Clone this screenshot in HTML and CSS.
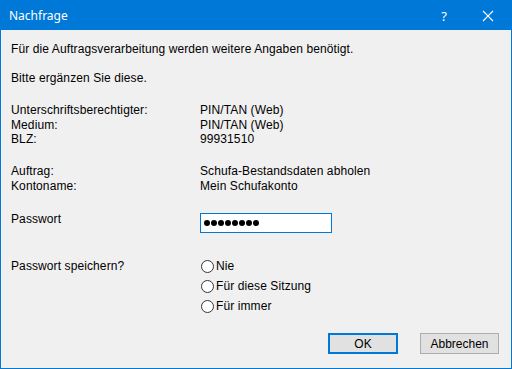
FILE: index.html
```html
<!DOCTYPE html>
<html lang="de">
<head>
<meta charset="utf-8">
<title>Nachfrage</title>
<link rel="stylesheet" href="styles.css">
</head>
<body>
<div class="window">
  <div class="titlebar">
    <span class="title">Nachfrage</span>
    <span class="tb-help">?</span>
    <span class="tb-close">
      <svg width="12" height="12" viewBox="0 0 12 12"><path d="M1 1 L11 11 M11 1 L1 11" stroke="#fff" stroke-width="1.1" fill="none"/></svg>
    </span>
  </div>
  <div class="content">
    <p class="line l1">Für die Auftragsverarbeitung werden weitere Angaben benötigt.</p>
    <p class="line l2">Bitte ergänzen Sie diese.</p>
    <div class="grid g1">
      <span>Unterschriftsberechtigter:</span><span>PIN/TAN (Web)</span>
      <span>Medium:</span><span>PIN/TAN (Web)</span>
      <span>BLZ:</span><span>99931510</span>
    </div>
    <div class="grid g2">
      <span>Auftrag:</span><span>Schufa-Bestandsdaten abholen</span>
      <span>Kontoname:</span><span>Mein Schufakonto</span>
    </div>
    <div class="pwrow">
      <span class="label">Passwort</span>
      <div class="input" aria-label="Passwort"><i class="dot"></i><i class="dot"></i><i class="dot"></i><i class="dot"></i><i class="dot"></i><i class="dot"></i><i class="dot"></i><i class="dot"></i></div>
    </div>
    <div class="saverow">
      <span class="label">Passwort speichern?</span>
      <div class="radios">
        <div class="radio"><span class="circle"></span>Nie</div>
        <div class="radio"><span class="circle"></span>Für diese Sitzung</div>
        <div class="radio"><span class="circle"></span>Für immer</div>
      </div>
    </div>
    <div class="buttons">
      <button class="btn ok">OK</button>
      <button class="btn cancel">Abbrechen</button>
    </div>
  </div>
</div>
</body>
</html>
```

FILE: styles.css
```css
html, body {
  margin: 0;
  padding: 0;
}
.window {
  width: 512px;
  height: 369px;
  box-sizing: border-box;
  border: 1px solid #0078d7;
  background: #f0f0f0;
  display: flex;
  flex-direction: column;
  font-family: "Liberation Sans", Arial, sans-serif;
  font-size: 12px;
  color: #000;
}
.titlebar {
  height: 29px;
  background: #0078d7;
  color: #fff;
  display: flex;
  align-items: center;
  font-family: "Noto Sans", "Open Sans", sans-serif;
  font-size: 12px;
}
.title {
  margin-left: 8px;
  flex: 1;
}
.tb-help {
  width: 46px;
  text-align: center;
  font-size: 13px;
  margin-right: -2px;
}
.tb-close {
  width: 46px;
  display: flex;
  justify-content: center;
  align-items: center;
}
.content {
  flex: 1;
  padding-left: 10px;
  line-height: 14.5px;
  letter-spacing: 0.1px;
  display: flex;
  flex-direction: column;
}
.line {
  margin: 0;
}
.l1 { margin-top: 12px; }
.l2 { margin-top: 14.5px; }
.grid {
  display: grid;
  grid-template-columns: 189px auto;
}
.g1 { margin-top: 17.5px; }
.g2 { margin-top: 17.5px; }
.pwrow {
  display: grid;
  grid-template-columns: 189px 132px;
  margin-top: 20px;
  align-items: start;
}
.pwrow .label {
  margin-top: -1px;
}
.input {
  height: 20px;
  box-sizing: border-box;
  border: 1px solid #0078d7;
  background: #fff;
  display: flex;
  align-items: center;
  gap: 1px;
  padding-left: 3px;
}
.dot {
  width: 6px;
  height: 6px;
  border-radius: 50%;
  background: #000;
}
.saverow {
  display: grid;
  grid-template-columns: 189px auto;
  margin-top: 23px;
}
.saverow .label {
  margin-top: 3px;
}
.radio {
  height: 20px;
  display: flex;
  align-items: center;
}
.circle {
  width: 11px;
  height: 11px;
  border: 1px solid #333;
  border-radius: 50%;
  background: #fff;
  margin-right: 2px;
  margin-left: 1px;
}
.buttons {
  display: flex;
  justify-content: flex-end;
  margin-top: 17px;
  padding-right: 12px;
}
.btn {
  height: 21px;
  box-sizing: border-box;
  background: #e1e1e1;
  border: 1px solid #adadad;
  font-family: "Liberation Sans", Arial, sans-serif;
  font-size: 12px;
  color: #000;
  padding: 0;
}
.ok {
  width: 70px;
  border: 2px solid #0078d7;
  margin-right: 22px;
}
.cancel {
  width: 79px;
}
```
